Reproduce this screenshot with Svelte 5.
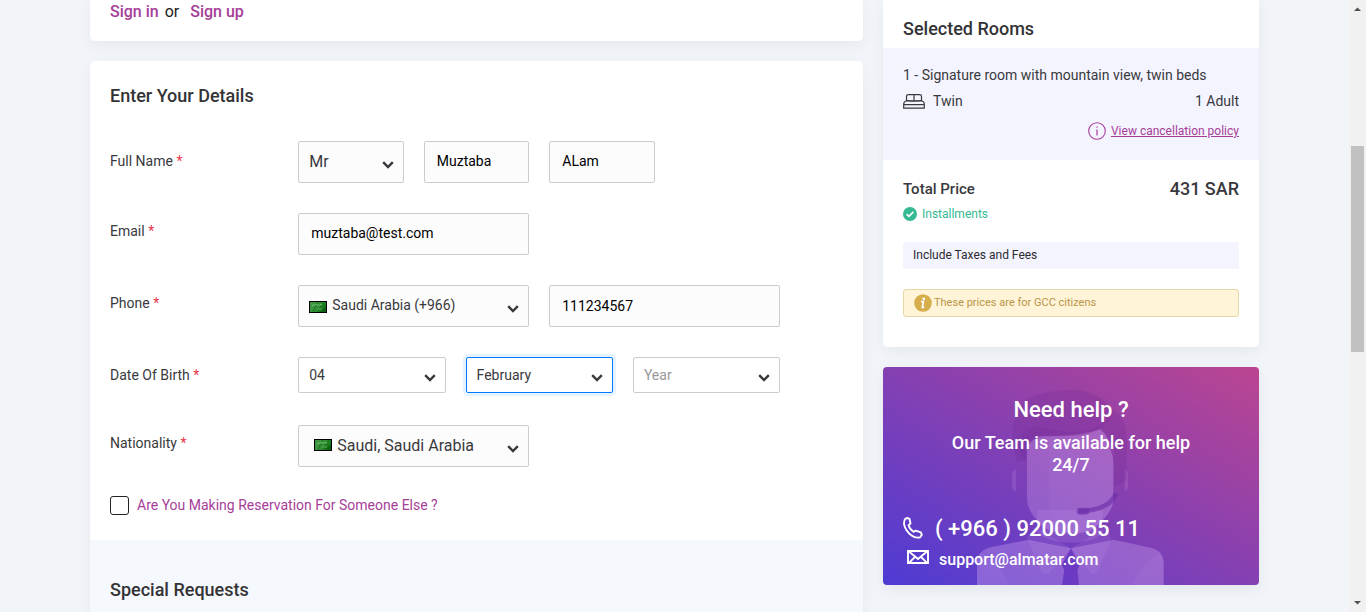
<script>
  let title = $state('Mr');
  let firstName = $state('Muztaba');
  let lastName = $state('ALam');
  let email = $state('muztaba@test.com');
  let dial = $state('Saudi Arabia (+966)');
  let phone = $state('111234567');
  let day = $state('04');
  let month = $state('February');
  let year = $state('');
  let nationality = $state('Saudi, Saudi Arabia');
  let forSomeoneElse = $state(false);
</script>

{#snippet chevron()}
  <svg class="chevron" viewBox="0 0 12 8" aria-hidden="true"><path d="M1.200 1.200 6 6l4.800-4.800" /></svg>
{/snippet}

{#snippet flag()}
  <svg class="flag" viewBox="0 0 18 12" aria-hidden="true">
    <rect width="18" height="12" fill="#000" />
    <rect x="1" y="1" width="16" height="10" fill="#1c7d20" />
    <path d="M1 1h7L3 11H1z" fill="#4aa04d" opacity=".7" />
    <path d="M9 1h5L8 11H4z" fill="#3c983f" opacity=".6" />
    <path d="M3 5.500 4.500 3.500l1 1L7 3.300l1 1.200L9.500 3.300l1 1.200L12 3.300l1 .7" fill="none" stroke="#8fc891" stroke-width="1" opacity=".8" />
    <path d="M8 8h5" stroke="#6bb36e" stroke-width="1" opacity=".8" />
    <path d="M11 11h6V5z" fill="#0b5a10" opacity=".8" />
  </svg>
{/snippet}

<div class="page">
  <main>
    <div class="left">
      <section class="card signin">
        <a href="#signin">Sign in</a><span>or</span><a href="#signup">Sign up</a>
      </section>

      <form class="card details">
        <h2>Enter Your Details</h2>

        <div class="row first">
          <label class="name" for="title">Full Name <b>*</b></label>
          <div class="fields four">
            <div class="control">
              <select id="title" class="large" bind:value={title}><option>Mr</option></select>
              {@render chevron()}
            </div>
            <input aria-label="First name" bind:value={firstName} />
            <input aria-label="Last name" bind:value={lastName} />
          </div>
        </div>

        <div class="row">
          <label class="name" for="email">Email <b>*</b></label>
          <div class="fields two"><input id="email" type="email" bind:value={email} /></div>
        </div>

        <div class="row">
          <label class="name" for="phone">Phone <b>*</b></label>
          <div class="fields two">
            <div class="control">
              {@render flag()}
              <select class="flagged" aria-label="Country code" bind:value={dial}><option>Saudi Arabia (+966)</option></select>
              {@render chevron()}
            </div>
            <input id="phone" class="tall" type="tel" bind:value={phone} />
          </div>
        </div>

        <div class="row birth">
          <label class="name" for="day">Date Of Birth <b>*</b></label>
          <div class="fields three">
            <div class="control">
              <select id="day" class="short" bind:value={day}><option>04</option></select>
              {@render chevron()}
            </div>
            <div class="control">
              <select class="short active" aria-label="Month" bind:value={month}><option>February</option></select>
              {@render chevron()}
            </div>
            <div class="control">
              <select class="short empty" aria-label="Year" bind:value={year}><option value="">Year</option></select>
              {@render chevron()}
            </div>
          </div>
        </div>

        <div class="row last">
          <label class="name" for="nationality">Nationality <b>*</b></label>
          <div class="fields two">
            <div class="control nation">
              {@render flag()}
              <select id="nationality" class="flagged large" bind:value={nationality}><option>Saudi, Saudi Arabia</option></select>
              {@render chevron()}
            </div>
          </div>
        </div>

        <label class="else">
          <input type="checkbox" bind:checked={forSomeoneElse} />
          <span>Are You Making Reservation For Someone Else ?</span>
        </label>

        <section class="special"><h2>Special Requests</h2></section>
      </form>
    </div>

    <aside>
      <section class="card summary">
        <h2>Selected Rooms</h2>
        <div class="room">
          <p>1 - Signature room with mountain view, twin beds</p>
          <div class="between">
            <span class="bed">
              <svg viewBox="0 0 22 15" width="22" height="15" fill="none" stroke="#39393d" stroke-width="1.200" aria-hidden="true">
                <path d="M3.500 7V2.500Q3.500.7 5.300.7h11.400q1.800 0 1.800 1.800V7M11 .7V7M3.500 6.300Q5 7 11 7t7.500-.7" />
                <path d="M.7 14.200V10Q1 7 3.500 7h15q2.500 0 2.800 3v4.200zM.7 10.600h20.600" />
              </svg>
              Twin
            </span>
            <span>1 Adult</span>
          </div>
          <div class="policy">
            <svg viewBox="0 0 18 18" width="18" height="18" aria-hidden="true">
              <circle cx="9" cy="9" r="8.300" fill="none" stroke="#a63e98" stroke-width="1.100" />
              <path d="M9 7.500v6M9 4.500v1.300" stroke="#a63e98" stroke-width="1.200" />
            </svg>
            <a href="#policy">View cancellation policy</a>
          </div>
        </div>
        <div class="price">
          <div class="between total"><span>Total Price</span><strong>431 SAR</strong></div>
          <div class="installments">
            <svg viewBox="0 0 14 14" width="14" height="14" aria-hidden="true">
              <circle cx="7" cy="7" r="7" fill="#35b994" />
              <path d="m3.600 7.200 2.300 2.200 4.500-4.500" fill="none" stroke="#fff" stroke-width="1.600" />
            </svg>
            <span>Installments</span>
          </div>
          <div class="taxes">Include Taxes and Fees</div>
          <div class="notice">
            <svg viewBox="0 0 18 18" width="18" height="18" aria-hidden="true">
              <circle cx="9" cy="9" r="8.800" fill="#d6ae4c" />
              <circle cx="9.800" cy="4.800" r="1.400" fill="#fff" />
              <path d="M7 7.700h2.400L8.300 13.400h2" fill="none" stroke="#fff" stroke-width="1.700" />
            </svg>
            <span>These prices are for GCC citizens</span>
          </div>
        </div>
      </section>

      <section class="help">
        <svg class="agent" viewBox="39 21 1128 654" preserveAspectRatio="xMidYMax slice" aria-hidden="true">
          <g fill="#cda2ee">
            <path d="M321 675v-72q2-28 34-40l120-24 128 26 128-26 115 25q34 10 35 42v69z" opacity=".36" />
            <path d="M321 675v-72q0-15 12-25 60 30 82 97zM881 675v-69q0-16-12-25-62 34-82 94z" opacity=".08" />
            <path d="M502 450h196v70q-30 28-95 28t-101-28z" opacity=".18" />
            <path d="M471 270q4-28 40-42 100 5 180-20 26 20 30 60 9 20 9 45v105q0 45-70 95-60 15-120 0-69-45-69-100z" opacity=".33" />
            <path d="M536 230q90 2 155-22 26 20 30 60 9 20 9 45v105q0 45-70 95-38 9-75 5-49-36-49-90z" opacity=".07" />
            <path d="m495 500 108 65-68 77q-12 5-22-10l-42-100zM711 500l-108 65 60 77q12 3 22-10l39-95z" opacity=".12" />
            <path d="M438 328q-12 5-12 15v35q0 12 12 16zM764 328q10 5 10 15v35q0 12-10 16z" opacity=".18" />
          </g>
          <path d="M440 302q-22-60-7-115 12-50 42-72 55-25 135-25 80 5 117 60 40 15 43 90v120q-10 15-38 16V270q-15-45-41-62-60 25-140 20-72-3-81 42v32z" fill="#66208b" opacity=".17" />
          <path d="M459 218q20-22 65-15 60 15 110 12 40-5 90-45-45 62-114 57-72-10-112 7-40 15-31 70-25-20-8-86z" fill="#66208b" opacity=".12" />
          <path d="M738 400q-18 51-112 54" fill="none" stroke="#6a2ba7" stroke-width="14" opacity=".6" />
          <rect x="620" y="443" width="38" height="21" rx="10" fill="#6a2ba7" opacity=".6" />
          <path d="m603 565 26 50-7 14 5 46h-51l7-46-8-14z" fill="#5c2abc" opacity=".7" />
        </svg>
        <div class="content">
          <h3>Need help ?</h3>
          <p>Our Team is available for help 24/7</p>
          <a class="tel" href="tel:+966920005511">
            <svg viewBox="0 0 20 22" width="20" height="22" fill="none" stroke="#fff" stroke-width="1.900" stroke-linejoin="round" aria-hidden="true">
              <path d="M2.200 1.800 4.400 1l2.100.8 1 4.700-1.900 1.700q.6 3.400 4.900 6.600l2.200-1.200 5.200 1.800.9 2.500-1.700 2.400q-4.400 1.200-8.500-1.800Q3 14.500 1.200 8 .7 4 2.200 1.800z" />
            </svg>
            <span>( +966 ) 92000 55 11</span>
          </a>
          <a class="mail" href="mailto:support@almatar.com">
            <svg viewBox="0 0 22 14" width="22" height="14" fill="none" stroke="#fff" stroke-width="1.900" aria-hidden="true">
              <path d="M1 1h20v12H1zM2 1.500l9 7.500 9-7.500M2 12.800l6-6M20 12.800l-6-6" />
            </svg>
            <span>support@almatar.com</span>
          </a>
        </div>
      </section>
    </aside>
  </main>

  <div class="scroll" aria-hidden="true">
    <svg viewBox="0 0 17 17"><path d="M5 11h7L8.500 7.500z" /></svg>
    <i class="before"></i><i class="thumb"></i><i class="after"></i>
    <svg viewBox="0 0 17 17"><path d="M5 6h7L8.500 9.500z" /></svg>
  </div>
</div>

<style>
  :global(body) { background: #f1f5fa; }
  * { box-sizing: border-box; }
  .page {
    display: flex;
    min-height: 100vh;
    font: 14px/20px Roboto, "Liberation Sans", sans-serif;
    color: #39393d;
  }
  main {
    flex: 1;
    min-width: 0;
    display: grid;
    grid-template-columns: minmax(0, 1fr) 376px;
    gap: 20px;
    padding: 0 90px;
  }
  h2, h3, p { margin: 0; font-weight: 500; }
  h2 { font-size: 18px; line-height: 24px; color: #333336; }
  a { color: #a63e98; }
  .card { background: #fff; box-shadow: 0 5px 15px rgba(0, 0, 0, 0.05); }
  .left { display: flex; flex-direction: column; gap: 20px; }
  .signin {
    display: flex;
    padding: 0 20px 18px;
    border-radius: 0 0 5px 5px;
    font-size: 16px;
    line-height: 23px;
    font-weight: 500;
  }
  .signin a { text-decoration: none; }
  .signin span { margin: 0 11px 0 6px; font-weight: 400; color: #222; }

  .details {
    flex: 1;
    display: flex;
    flex-direction: column;
    border-radius: 5px 5px 0 0;
    padding-top: 23px;
  }
  .details > h2 { padding-left: 20px; margin-bottom: 33px; }
  .row {
    display: grid;
    grid-template-columns: 3fr 8fr 1fr;
    padding-left: 20px;
    margin-bottom: 30px;
  }
  .birth { margin-bottom: 32px; }
  .last { margin-bottom: 28px; }
  .name { padding-top: 8px; }
  .first .name { padding-top: 10px; }
  .name b { font-weight: 400; color: #e8384f; }
  .fields { display: grid; gap: 20px; padding-right: 20px; }
  .two { grid-template-columns: repeat(2, minmax(0, 1fr)); }
  .three { grid-template-columns: repeat(3, minmax(0, 1fr)); }
  .four { grid-template-columns: repeat(4, minmax(0, 1fr)); }
  .control { position: relative; display: flex; }
  select, .fields input {
    appearance: none;
    width: 100%;
    height: 42px;
    margin: 0;
    border: 1px solid #ccc;
    border-radius: 2px;
    background: #fcfcfc;
    font: inherit;
    color: #000;
    padding: 0 12px 2px;
    outline: none;
  }
  .fields .tall { padding-bottom: 0; }
  select { color: #39393d; padding: 0 28px 2px 10px; }
  .large { font-size: 16px; padding-bottom: 0; }
  .flagged { padding-left: 33px; }
  .nation .flagged { padding-left: 38px; }
  .short { height: 36px; background: #fff; padding-bottom: 0; }
  .active { border-color: #007bff; box-shadow: 0 0 0 3px rgba(0, 123, 255, 0.1); }
  .empty { color: #999; }
  .chevron {
    position: absolute;
    right: 10px;
    top: calc(50% - 1px);
    width: 12px;
    height: 8px;
    fill: none;
    stroke: #39393d;
    stroke-width: 2.4;
    pointer-events: none;
  }
  .flag {
    position: absolute;
    left: 11px;
    top: calc(50% - 5px);
    width: 18px;
    height: 12px;
    pointer-events: none;
  }
  .nation .flag { left: 16px; top: calc(50% - 7px); }
  .else {
    display: flex;
    align-items: center;
    align-self: flex-start;
    gap: 8px;
    padding: 0 20px;
    margin-bottom: 25px;
    color: #a63e98;
  }
  .else input {
    appearance: none;
    width: 19px;
    height: 19px;
    margin: 0;
    border: 1px solid #222;
    border-radius: 3px;
    background: #fff;
  }
  .special { flex: 1; background: #f5f8fd; padding: 38px 20px 0; }

  aside { display: flex; flex-direction: column; gap: 20px; }
  .summary { border-radius: 0 0 5px 5px; padding-bottom: 30px; }
  .summary h2 { padding: 17px 20px 7px; }
  .between { display: flex; justify-content: space-between; align-items: center; }
  .room { background: #f4f4ff; padding: 17px 20px 19px; }
  .room p { font-weight: 400; margin-bottom: 6px; }
  .bed { display: flex; align-items: center; gap: 8px; }
  .policy {
    display: flex;
    justify-content: flex-end;
    align-items: center;
    gap: 5px;
    margin-top: 10px;
    font-size: 12px;
  }
  .price { padding: 17px 20px 0; }
  .total { font-size: 15px; line-height: 24px; font-weight: 500; }
  .total strong { font-size: 18px; font-weight: 500; }
  .installments {
    display: flex;
    align-items: center;
    gap: 5px;
    margin: 3px 0 18px;
    font-size: 12px;
    color: #35b994;
  }
  .taxes {
    padding: 3px 10px 4px;
    border-radius: 2px;
    background: #f4f4ff;
    font-size: 12px;
    color: #2b2b30;
  }
  .notice {
    display: flex;
    align-items: center;
    gap: 2px;
    margin-top: 20px;
    padding: 3px 10px;
    border: 1px solid #e7d7a4;
    border-radius: 3px;
    background: #fff3d8;
    font-size: 11px;
    color: #b8964a;
  }

  .help {
    position: relative;
    overflow: hidden;
    border-radius: 4px;
    background: linear-gradient(to top right, #4e3bd4, #bb4591);
    box-shadow: 0 5px 15px rgba(0, 0, 0, 0.06);
    color: #fff;
  }
  .agent { position: absolute; inset: 0; width: 100%; height: 100%; }
  .content { position: relative; padding: 31px 20px 14px; }
  .content h3 { font-size: 22px; line-height: 24px; text-align: center; }
  .content p {
    padding: 0 40px;
    margin: 10px 0 39px;
    font-size: 18px;
    line-height: 22px;
    text-align: center;
  }
  .content a {
    display: flex;
    align-items: center;
    color: #fff;
    font-weight: 500;
    text-decoration: none;
  }
  .tel { gap: 12px; font-size: 22px; line-height: 28px; }
  .tel svg { margin-bottom: 2px; }
  .mail { gap: 10px; margin-top: 6px; padding-left: 4px; font-size: 16px; line-height: 22px; }
  .mail svg { margin-bottom: 6px; }

  .scroll {
    width: 17px;
    display: flex;
    flex-direction: column;
    background: #f1f1f1;
  }
  .scroll svg { width: 17px; height: 17px; fill: #505050; }
  .thumb { flex: 206; margin: 0 2px; background: #c1c1c1; }
  .before { flex: 129; }
  .after { flex: 243; }
</style>
